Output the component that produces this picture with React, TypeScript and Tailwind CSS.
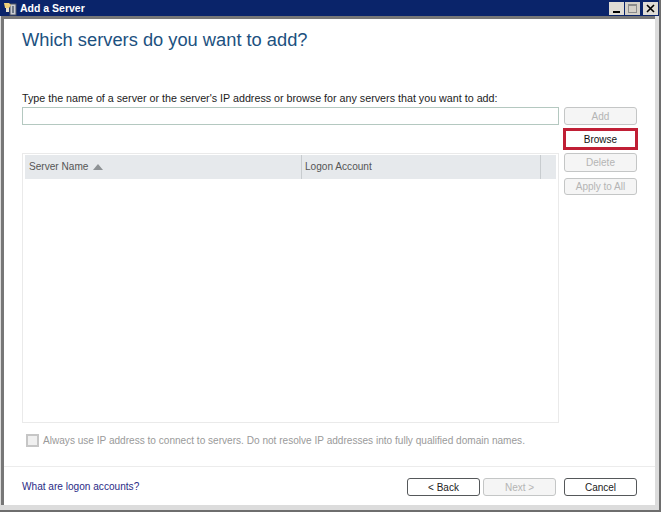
import React from "react";

const SideButton = ({ label, className }: { label: string; className: string }) => {
  return (
    <button className={`w-[73px] rounded-[3px] border border-[#c4c6c6] bg-[#f5f5f5] text-[10px] text-[#b4b4b4] ${className}`}>
      {label}
    </button>
  );
};

const FootButton = ({ label, disabled, className }: { label: string; disabled?: boolean; className?: string }) => {
  return (
    <button
      className={
        disabled
          ? `h-[18px] w-[73px] rounded-[3px] border border-[#c4c6c6] bg-[#f5f5f5] text-[10px] text-[#b4b4b4] ${className}`
          : `h-[18px] w-[73px] rounded-[3px] border border-[#55585a] bg-white text-[10px] text-[#222] ${className}`
      }
    >
      {label}
    </button>
  );
};

const App = () => {
  return (
    <div className="flex h-[512px] w-[661px] flex-col overflow-hidden border-b-2 border-r-2 border-[#6e6e6e] bg-[#dcdcdc] font-['Liberation_Sans',Arial,sans-serif]">
      {/* Title bar */}
      <div className="flex h-[16px] shrink-0 items-center justify-between bg-[#0a246a] pl-[3px] pr-[1px]">
        <div className="flex items-center gap-[2px]">
          <svg width="15" height="15" viewBox="0 0 15 15">
            <rect x="7" y="3" width="6" height="11" fill="#c9ccd2" stroke="#4c5361" strokeWidth="1" />
            <rect x="9" y="5" width="2" height="7" fill="#6f7986" />
            <path d="M1 2h5l2 2-2 3H2z" fill="#f0d27a" />
            <path d="M3 7h3v4H3z" fill="#e8e2cf" />
          </svg>
          <span className="pt-[1px] text-[10.5px] font-bold leading-none text-white">Add a Server</span>
        </div>
        <div className="flex items-center gap-[1px]">
          <div className="flex h-[13px] w-[15px] items-end justify-center bg-[#dfdcd5] pb-[2px]">
            <div className="h-[2px] w-[7px] bg-black" />
          </div>
          <div className="flex h-[13px] w-[15px] items-center justify-center bg-[#d4d0c8]">
            <div className="h-[9px] w-[9px] border border-[#8c8c8c] border-t-2" />
          </div>
          <div className="ml-[2px] flex h-[13px] w-[15px] items-center justify-center bg-[#dfdcd5]">
            <svg width="9" height="9" viewBox="0 0 9 9">
              <path d="M1 1l7 7M8 1l-7 7" stroke="#000" strokeWidth="1.6" />
            </svg>
          </div>
        </div>
      </div>

      {/* Dialog body */}
      <div className="mb-[5px] ml-[1px] mr-[4px] flex min-h-0 flex-1 flex-col border-l-[3px] border-t-[3px] border-[#777] bg-white">
        <h1 className="ml-[18px] mt-[8px] text-[18.3px] leading-[26px] text-[#1c5180]">Which servers do you want to add?</h1>

        <div className="ml-[18px] mt-[39px] text-[10.72px] leading-[12px] text-[#222]">
          Type the name of a server or the server's IP address or browse for any servers that you want to add:
        </div>

        <div className="ml-[18px] mt-[3px] flex gap-[5px]">
          <div className="flex w-[537px] flex-col">
            <div className="h-[18px] border border-[#b4c8c0] bg-white" />
            <div className="mt-[28px] flex h-[270px] flex-col border border-[#eaeaea] px-[2px] pt-[1px]">
              <div className="flex h-[24px] bg-[#e6e9ec] text-[10.1px] text-[#555]">
                <div className="flex w-[277px] items-center gap-[5px] border-r border-[#c8cccf] pl-[4px]">
                  Server Name
                  <svg width="10" height="6" viewBox="0 0 10 6">
                    <path d="M5 0l5 6H0z" fill="#8e9295" />
                  </svg>
                </div>
                <div className="flex w-[239px] items-center border-r border-[#c8cccf] pl-[3px]">Logon Account</div>
              </div>
            </div>
          </div>

          <div className="flex flex-col">
            <SideButton label="Add" className="h-[18px]" />
            <button className="-ml-[1px] mt-[3px] h-[22px] w-[75px] border-[3px] border-[#c01f35] bg-white text-[10px] text-[#111]">
              Browse
            </button>
            <SideButton label="Delete" className="mt-[3px] h-[19px]" />
            <SideButton label="Apply to All" className="mt-[6px] h-[17px]" />
          </div>
        </div>

        <div className="ml-[22px] mt-[11px] flex items-center gap-[4px]">
          <div className="h-[13px] w-[13px] border-2 border-[#c6c6c6] bg-[#f0f0f0]" />
          <span className="text-[10.09px] leading-[13px] text-[#9a9a9a]">
            Always use IP address to connect to servers. Do not resolve IP addresses into fully qualified domain names.
          </span>
        </div>

        <div className="mt-[19px] flex flex-1 items-center justify-between border-t border-[#ececec] pl-[18px] pr-[18px] pt-[2px]">
          <span className="text-[10.1px] text-[#2a2a86]">What are logon accounts?</span>
          <div className="flex">
            <FootButton label="< Back" />
            <FootButton label="Next >" disabled className="ml-[3px]" />
            <FootButton label="Cancel" className="ml-[8px]" />
          </div>
        </div>
      </div>
    </div>
  );
};

export default App;
